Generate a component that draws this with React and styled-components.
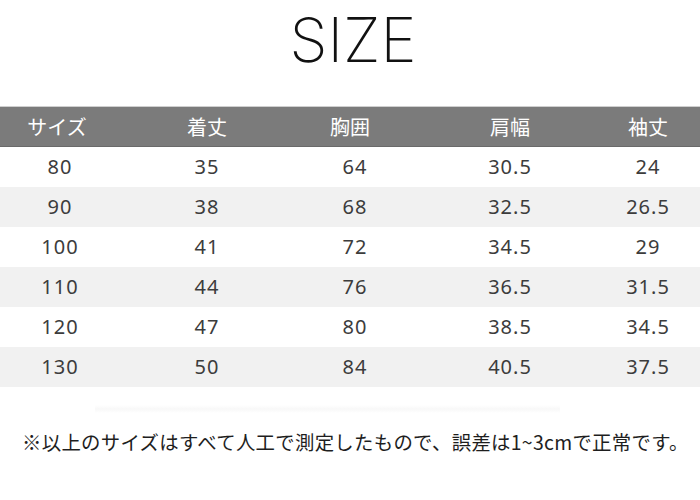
import React from "react";
import styled, { createGlobalStyle } from "styled-components";

const GlobalStyle = createGlobalStyle`
  html, body {
    margin: 0;
    padding: 0;
    background: #fff;
  }
  body {
    font-family: "Noto Sans", "Noto Sans CJK JP", sans-serif;
  }
`;

const Page = styled.div`
  width: 700px;
  height: 500px;
  background: #fff;
  display: flex;
  flex-direction: column;
  overflow: hidden;
`;

const Title = styled.h1`
  margin: 0;
  height: 106px;
  display: flex;
  align-items: flex-start;
  justify-content: center;
  padding-top: 3px;
  box-sizing: border-box;
  font-family: "Inter", "Liberation Sans", sans-serif;
  font-weight: 200;
  font-size: 61px;
  letter-spacing: 0px;
  color: #111;
  padding-left: 6px;
`;

const Table = styled.div`
  display: flex;
  flex-direction: column;
  border-top: 1px solid #cfcfcf;
`;

const cols = "114px 186px 100px 220px 56px";

const HeadRow = styled.div`
  display: grid;
  grid-template-columns: ${cols};
  height: 39px;
  align-items: center;
  background: #7b7b7b;
  border-bottom: 1px solid #6a6a6a;
`;

const HeadCell = styled.div`
  text-align: center;
  color: #fff;
  font-family: "Noto Sans CJK JP", sans-serif;
  font-size: 20px;
  line-height: 1;
`;

const Row = styled.div`
  display: grid;
  grid-template-columns: ${cols};
  height: 40px;
  align-items: center;
  background: ${(p) => (p.$alt ? "#f1f1f1" : "#fff")};
`;

const Cell = styled.div`
  text-align: center;
  color: #3c3c3c;
  font-family: "Noto Sans", sans-serif;
  font-size: 20px;
  letter-spacing: 1px;
  line-height: 1;
  padding-left: ${(p) => p.$shift || 0}px;
`;

const Fade = styled.div`
  margin: 18px 0 0 95px;
  width: 465px;
  height: 8px;
  background: linear-gradient(#fff, #f8f8f8 50%, #fff);
`;

const Note = styled.p`
  margin: 19px 0 0 22px;
  font-family: "Noto Sans CJK JP", sans-serif;
  font-size: 19.4px;
  letter-spacing: 0.3px;
  line-height: 1;
  color: #1e1e1e;
  white-space: nowrap;
`;

const heads = ["サイズ", "着丈", "胸囲", "肩幅", "袖丈"];
const bodyShifts = [6, 0, 10, 0, 0];

const rows = [
  ["80", "35", "64", "30.5", "24"],
  ["90", "38", "68", "32.5", "26.5"],
  ["100", "41", "72", "34.5", "29"],
  ["110", "44", "76", "36.5", "31.5"],
  ["120", "47", "80", "38.5", "34.5"],
  ["130", "50", "84", "40.5", "37.5"],
];

export default function App() {
  return (
    <Page>
      <GlobalStyle />
      <Title>SIZE</Title>
      <Table>
        <HeadRow>
          {heads.map((h) => (
            <HeadCell key={h}>{h}</HeadCell>
          ))}
        </HeadRow>
        {rows.map((r, i) => (
          <Row key={r[0]} $alt={i % 2 === 1}>
            {r.map((v, j) => (
              <Cell key={j} $shift={bodyShifts[j]}>{v}</Cell>
            ))}
          </Row>
        ))}
      </Table>
      <Fade />
      <Note>※以上のサイズはすべて人工で測定したもので、誤差は1~3cmで正常です。</Note>
    </Page>
  );
}
